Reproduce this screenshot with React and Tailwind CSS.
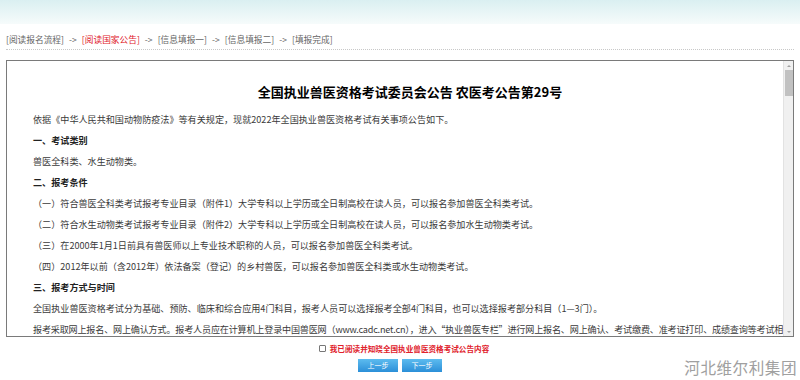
import React from "react";

const steps = [
  { label: "[阅读报名流程]", active: false },
  { label: "[阅读国家公告]", active: true },
  { label: "[信息填报一]", active: false },
  { label: "[信息填报二]", active: false },
  { label: "[填报完成]", active: false },
];

const lines = [
  { text: "依据《中华人民共和国动物防疫法》等有关规定，现就2022年全国执业兽医资格考试有关事项公告如下。" },
  { text: "一、考试类别", bold: true },
  { text: "兽医全科类、水生动物类。" },
  { text: "二、报考条件", bold: true },
  { text: "（一）符合兽医全科类考试报考专业目录（附件1）大学专科以上学历或全日制高校在读人员，可以报名参加兽医全科类考试。" },
  { text: "（二）符合水生动物类考试报考专业目录（附件2）大学专科以上学历或全日制高校在读人员，可以报名参加水生动物类考试。" },
  { text: "（三）在2000年1月1日前具有兽医师以上专业技术职称的人员，可以报名参加兽医全科类考试。" },
  { text: "（四）2012年以前（含2012年）依法备案（登记）的乡村兽医，可以报名参加兽医全科类或水生动物类考试。" },
  { text: "三、报考方式与时间", bold: true },
  { text: "全国执业兽医资格考试分为基础、预防、临床和综合应用4门科目，报考人员可以选择报考全部4门科目，也可以选择报考部分科目（1—3门）。" },
  { text: "报考采取网上报名、网上确认方式。报考人员应在计算机上登录中国兽医网（www.cadc.net.cn），进入“执业兽医专栏”进行网上报名、网上确认、考试缴费、准考证打印、成绩查询等考试相", tight: true },
];

export default function App() {
  return (
    <div
      className="relative w-[800px] h-[380px] overflow-hidden bg-white"
      style={{ fontFamily: '"Noto Sans CJK SC", "Noto Sans", sans-serif' }}
    >
      {/* top banner */}
      <div className="h-[24px] bg-gradient-to-b from-[#daeff1] to-[#f6fbfb]" />

      {/* breadcrumb */}
      <div className="mx-[6px] h-[26px] flex items-end pb-[3px] border-b border-dotted border-[#c8c8c8] text-[8.7px] text-[#666]">
        {steps.map((s, i) => (
          <span key={i} className="flex items-center">
            <span className={s.active ? "text-[#e0202a]" : ""}>{s.label}</span>
            {i < steps.length - 1 && <span className="mx-[5px]">-&gt;</span>}
          </span>
        ))}
      </div>

      {/* notice box */}
      <div className="mx-[6px] mt-[10px] h-[277px] border border-[#7a7a7a] flex">
        <div className="flex-1 overflow-hidden pl-[26px] pr-[4px] pt-[19px] text-[9.1px] text-[#3a3a3a]">
          <h1 className="text-center text-[13px] leading-[24px] font-bold text-black pl-[8px]">
            全国执业兽医资格考试委员会公告 农医考公告第29号
          </h1>
          <div className="mt-[5px]">
            {lines.map((l, i) => (
              <p
                key={i}
                className={`leading-[21px] whitespace-nowrap ${l.bold ? "font-bold text-[#222]" : ""} ${l.tight ? "tracking-[-0.2px]" : ""}`}
              >
                {l.text}
              </p>
            ))}
          </div>
        </div>
        {/* scrollbar */}
        <div className="w-[10px] bg-[#f0f0f0] border-l border-[#e2e2e2] flex flex-col items-center">
          <div className="h-[9px] flex items-center justify-center">
            <div className="w-0 h-0 border-l-[2px] border-r-[2px] border-b-[2px] border-l-transparent border-r-transparent border-b-[#a0a0a0]" />
          </div>
          <div className="w-[8px] h-[26px] bg-[#c1c1c1]" />
          <div className="flex-1" />
          <div className="h-[9px] flex items-center justify-center">
            <div className="w-0 h-0 border-l-[2px] border-r-[2px] border-t-[2px] border-l-transparent border-r-transparent border-t-[#a0a0a0]" />
          </div>
        </div>
      </div>

      {/* agreement */}
      <div className="mt-[6px] flex items-center justify-center gap-[4px] pl-[8px]">
        <span className="w-[7px] h-[7px] border border-[#777] rounded-[1px] bg-white" />
        <span className="text-[7.6px] font-bold text-[#e0202a]">我已阅读并知晓全国执业兽医资格考试公告内容</span>
      </div>

      {/* buttons */}
      <div className="mt-[5px] flex justify-center gap-[4px]">
        <button className="w-[40px] h-[13px] bg-gradient-to-b from-[#5cbcef] to-[#2b8fd8] text-white text-[7px] leading-[13px]">
          上一步
        </button>
        <button className="w-[40px] h-[13px] bg-gradient-to-b from-[#5cbcef] to-[#2b8fd8] text-white text-[7px] leading-[13px]">
          下一步
        </button>
      </div>

      {/* watermark */}
      <div className="absolute right-[3px] top-[356px] text-[15.6px] text-[#a0a0a0] tracking-[0.5px]">
        河北维尔利集团
      </div>
    </div>
  );
}
